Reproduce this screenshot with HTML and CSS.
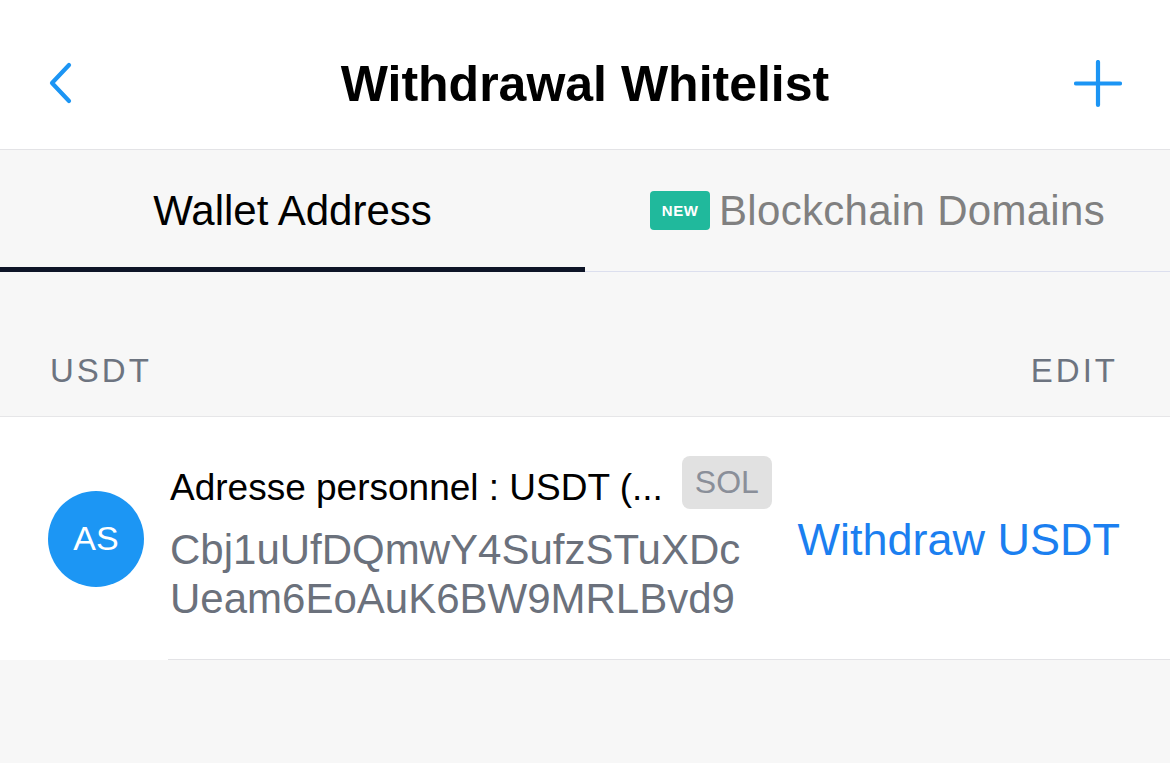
FILE: index.html
```html
<!DOCTYPE html>
<html lang="en">
<head>
<meta charset="utf-8">
<title>Withdrawal Whitelist</title>
<link rel="stylesheet" href="styles.css">
</head>
<body>
<header class="header">
  <div class="header-left">
    <svg class="icon" width="46" height="46" viewBox="0 0 46 46" aria-hidden="true">
      <path d="M21 4 L4 22 L21 40" fill="none" stroke="#1c95f4" stroke-width="4.2" stroke-linecap="round" stroke-linejoin="round"/>
    </svg>
  </div>
  <h1 class="title">Withdrawal Whitelist</h1>
  <div class="header-right">
    <svg class="icon" width="48" height="48" viewBox="0 0 48 48" aria-hidden="true">
      <path d="M24 2 V45 M2 23.5 H46" fill="none" stroke="#1c95f4" stroke-width="4.2" stroke-linecap="round"/>
    </svg>
  </div>
</header>

<nav class="tabs">
  <div class="tab tab-active"><span class="tab-label">Wallet Address</span></div>
  <div class="tab tab-inactive">
    <span class="badge-new">NEW</span>
    <span class="tab-label tab-label-muted">Blockchain Domains</span>
  </div>
</nav>

<section class="section-head">
  <span class="section-label">USDT</span>
  <span class="section-label">EDIT</span>
</section>

<div class="row">
  <div class="avatar">AS</div>
  <div class="row-body">
    <div class="row-text">
      <div class="row-title">
        <span class="row-name">Adresse personnel : USDT (...</span>
        <span class="chain">SOL</span>
      </div>
      <div class="address">Cbj1uUfDQmwY4SufzSTuXDcUeam6EoAuK6BW9MRLBvd9</div>
    </div>
    <a class="action">Withdraw USDT</a>
  </div>
</div>
</body>
</html>
```

FILE: styles.css
```css
* { box-sizing: border-box; }

html, body {
  margin: 0;
  padding: 0;
}

body {
  width: 1170px;
  height: 763px;
  background: #f7f7f7;
  font-family: "Liberation Sans", Arial, sans-serif;
  overflow: hidden;
}

.header {
  height: 150px;
  background: #ffffff;
  border-bottom: 1px solid #e3e3e6;
  display: grid;
  grid-template-columns: 1fr auto 1fr;
  align-items: center;
  padding: 18px 48px 0 48px;
}

.header-left {
  display: flex;
  justify-content: flex-start;
}

.header-right {
  display: flex;
  justify-content: flex-end;
}

.icon { display: block; }

.title {
  margin: 0;
  font-size: 50px;
  font-weight: bold;
  color: #000000;
  letter-spacing: 0;
  line-height: 1;
}

.tabs {
  display: flex;
  height: 122px;
  background: #f7f7f7;
}

.tab {
  flex: 1;
  display: flex;
  align-items: center;
  justify-content: center;
}

.tab-active {
  border-bottom: 5px solid #0e1527;
  padding-top: 4px;
}

.tab-inactive {
  border-bottom: 1px solid #dcdfee;
  padding-bottom: 4px;
  padding-top: 4px;
}

.tab-label {
  font-size: 42px;
  color: #000000;
  line-height: 1;
}

.tab-label-muted {
  color: #808080;
  letter-spacing: 0.3px;
}

.badge-new {
  display: inline-flex;
  align-items: center;
  justify-content: center;
  width: 60px;
  height: 39px;
  margin-right: 9px;
  background: #20b99c;
  border-radius: 4px;
  color: #ffffff;
  font-size: 15px;
  font-weight: bold;
  letter-spacing: 0.5px;
}

.section-head {
  height: 145px;
  display: flex;
  justify-content: space-between;
  align-items: flex-end;
  padding: 0 52px 29px 50px;
  border-bottom: 1px solid #e6e6e8;
}

.section-label {
  font-size: 33px;
  line-height: 1;
  color: #6d7480;
  letter-spacing: 3px;
}

.row {
  display: flex;
  align-items: center;
  background: #ffffff;
  padding-left: 48px;
  height: 243px;
}

.avatar {
  width: 96px;
  height: 96px;
  flex: none;
  border-radius: 50%;
  background: #1c96f4;
  color: #ffffff;
  font-size: 34px;
  display: flex;
  align-items: center;
  justify-content: center;
  margin-right: 24px;
}

.row-body {
  flex: 1;
  align-self: stretch;
  display: flex;
  align-items: center;
  justify-content: space-between;
  padding: 0 50px 0 2px;
  border-bottom: 1px solid #e3e3e6;
}

.row-text {
  display: flex;
  flex-direction: column;
  padding-top: 2px;
}

.row-title {
  display: flex;
  align-items: center;
  margin-bottom: 16px;
}

.row-name {
  font-size: 37px;
  color: #000000;
  line-height: 1;
  margin-right: 19px;
  padding-top: 10px;
}

.chain {
  display: inline-flex;
  align-items: center;
  justify-content: center;
  height: 53px;
  width: 90px;
  background: #e1e1e1;
  border-radius: 8px;
  color: #8a8f99;
  font-size: 32px;
}

.address {
  width: 590px;
  font-size: 42px;
  line-height: 49px;
  color: #6b717c;
  word-break: break-all;
}

.action {
  font-size: 45px;
  color: #1b7ff0;
  line-height: 1;
  padding-top: 2px;
}
```
